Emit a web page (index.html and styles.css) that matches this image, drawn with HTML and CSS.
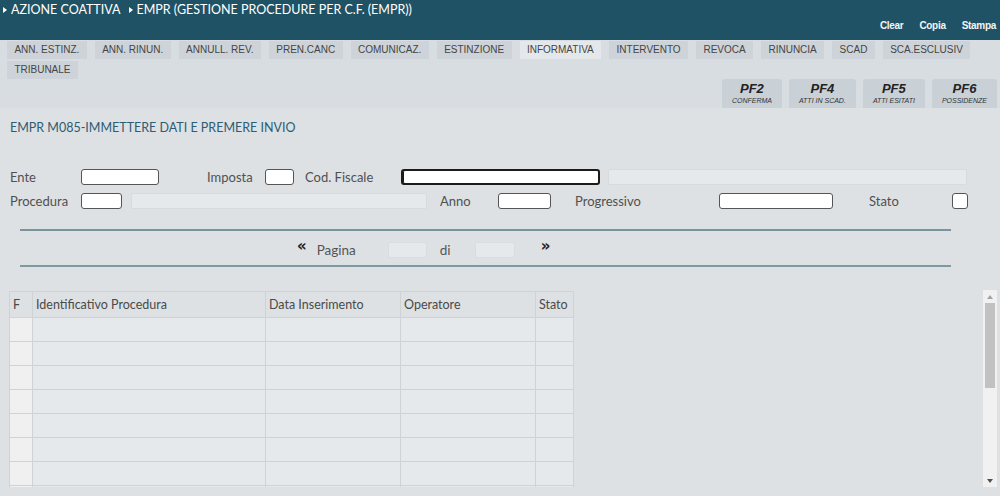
FILE: index.html
```html
<!DOCTYPE html>
<html lang="it">
<head>
<meta charset="utf-8">
<title>EMPR - Gestione procedure per C.F.</title>
<link rel="stylesheet" href="styles.css">
</head>
<body>
<header class="topbar">
  <nav class="crumbs">
    <span class="crumb"><i class="tri"></i>AZIONE COATTIVA</span>
    <span class="crumb"><i class="tri"></i>EMPR (GESTIONE PROCEDURE PER C.F. (EMPR))</span>
  </nav>
  <div class="actions"><a>Clear</a><a>Copia</a><a>Stampa</a></div>
</header>

<div class="toolbar">
  <ul class="tabs">
    <li class="tab">ANN. ESTINZ.</li>
    <li class="tab">ANN. RINUN.</li>
    <li class="tab">ANNULL. REV.</li>
    <li class="tab">PREN.CANC</li>
    <li class="tab">COMUNICAZ.</li>
    <li class="tab">ESTINZIONE</li>
    <li class="tab active">INFORMATIVA</li>
    <li class="tab">INTERVENTO</li>
    <li class="tab">REVOCA</li>
    <li class="tab">RINUNCIA</li>
    <li class="tab">SCAD</li>
    <li class="tab">SCA.ESCLUSIV</li>
    <li class="tab">TRIBUNALE</li>
  </ul>
  <div class="pfbar">
    <button class="pf"><b>PF2</b><span>CONFERMA</span></button>
    <button class="pf"><b>PF4</b><span>ATTI IN SCAD.</span></button>
    <button class="pf"><b>PF5</b><span>ATTI ESITATI</span></button>
    <button class="pf"><b>PF6</b><span>POSSIDENZE</span></button>
  </div>
</div>

<main class="main">
  <h1 class="title">EMPR M085-IMMETTERE DATI E PREMERE INVIO</h1>

  <div class="form">
    <div class="row">
      <label class="lbl w-ente">Ente</label>
      <span class="inp w-78"></span>
      <label class="lbl w-imposta">Imposta</label>
      <span class="inp w-29"></span>
      <label class="lbl w-codf">Cod. Fiscale</label>
      <span class="inp focus w-199"></span>
      <span class="inp off w-codf-desc"></span>
    </div>
    <div class="row">
      <label class="lbl w-ente">Procedura</label>
      <span class="inp w-41"></span>
      <span class="inp off w-proc-desc"></span>
      <label class="lbl w-anno">Anno</label>
      <span class="inp w-53"></span>
      <label class="lbl w-prog">Progressivo</label>
      <span class="inp w-114"></span>
      <label class="lbl w-stato">Stato</label>
      <span class="inp w-16"></span>
    </div>
  </div>

  <div class="pager">
    <span class="arrow">&laquo;</span>
    <span class="plabel">Pagina</span>
    <span class="pinp"></span>
    <span class="pdi">di</span>
    <span class="pinp pinp2"></span>
    <span class="arrow next">&raquo;</span>
  </div>

  <div class="grid-wrap">
    <div class="grid-view">
      <table class="grid">
        <thead>
          <tr>
            <th class="c-f">F</th>
            <th class="c-id">Identificativo Procedura</th>
            <th class="c-data">Data Inserimento</th>
            <th class="c-op">Operatore</th>
            <th class="c-st">Stato</th>
          </tr>
        </thead>
        <tbody>
          <tr><td class="c-f"></td><td></td><td></td><td></td><td></td></tr>
          <tr><td class="c-f"></td><td></td><td></td><td></td><td></td></tr>
          <tr><td class="c-f"></td><td></td><td></td><td></td><td></td></tr>
          <tr><td class="c-f"></td><td></td><td></td><td></td><td></td></tr>
          <tr><td class="c-f"></td><td></td><td></td><td></td><td></td></tr>
          <tr><td class="c-f"></td><td></td><td></td><td></td><td></td></tr>
          <tr><td class="c-f"></td><td></td><td></td><td></td><td></td></tr>
          <tr><td class="c-f"></td><td></td><td></td><td></td><td></td></tr>
        </tbody>
      </table>
    </div>
    <div class="vscroll" aria-hidden="true">
      <span class="sb-btn"><i class="sb-up"></i></span>
      <span class="sb-thumb"></span>
      <span class="sb-rest"></span>
      <span class="sb-btn"><i class="sb-down"></i></span>
    </div>
  </div>
</main>
</body>
</html>
```
FILE: styles.css
```css
html, body {
  margin: 0;
  height: 496px;
  overflow: hidden;
}
body {
  background: #dce0e3;
  font-family: Lato, "Noto Sans", sans-serif;
  color: #555;
}

/* ---------- top bar ---------- */
.topbar {
  background: #1f5264;
  height: 40px;
  display: flex;
  flex-direction: column;
  justify-content: space-between;
}
.crumbs {
  display: flex;
  gap: 8px;
  padding: 2px 0 0 3px;
  color: #fff;
  font-size: 12.5px;
  line-height: 15px;
}
.crumb {
  display: flex;
  align-items: center;
  gap: 4px;
}
.tri {
  width: 0;
  height: 0;
  border-left: 4px solid #fff;
  border-top: 3.5px solid transparent;
  border-bottom: 3.5px solid transparent;
}
.actions {
  display: flex;
  justify-content: flex-end;
  gap: 16px;
  padding: 0 4px 8px 0;
  font: bold 10px/12px "Liberation Sans", Arial, sans-serif;
  letter-spacing: -0.3px;
  color: #f2f5f6;
}

/* ---------- tabs + PF ---------- */
.toolbar {
  background: #d8dde1;
  height: 68px;
}
.tabs {
  display: flex;
  flex-wrap: wrap;
  gap: 2px 8px;
  margin: 0;
  padding: 1px 0 0 7px;
  list-style: none;
}
.tab {
  height: 18px;
  padding: 0 7.4px;
  background: #cdd3d8;
  font: 10px/18px "Liberation Sans", Arial, sans-serif;
  color: #454545;
}
.tab.active {
  background: #e5e8eb;
}
.pfbar {
  display: flex;
  justify-content: flex-end;
  gap: 7px;
  padding-right: 3px;
}
.pf {
  height: 29px;
  padding: 3px 10px 0;
  border: 0;
  border-radius: 3px 3px 0 0;
  background: #c9d0d6;
  display: flex;
  flex-direction: column;
  align-items: center;
  font-family: "Liberation Sans", Arial, sans-serif;
  font-style: italic;
  color: #222;
}
.pf b {
  font-size: 13px;
  line-height: 13px;
}
.pf span {
  margin-top: 2px;
  font-size: 7px;
  line-height: 8px;
  color: #333;
}

/* ---------- main ---------- */
.main {
  background: #dde1e4;
  height: 388px;
}
.title {
  margin: 0;
  padding: 12px 0 0 10px;
  font-size: 12.5px;
  line-height: 15px;
  font-weight: normal;
  color: #2c5d73;
}

.form {
  display: flex;
  flex-direction: column;
  gap: 8px;
  padding: 34px 0 0 10px;
}
.row {
  display: flex;
  align-items: center;
  height: 16px;
}
.lbl {
  flex: none;
  font-size: 13px;
  line-height: 16px;
  color: #505050;
}
.inp {
  flex: none;
  box-sizing: border-box;
  height: 16px;
  background: #fff;
  border: 1px solid #555;
  border-radius: 3px;
}
.inp.focus {
  border: 2px solid #1b1b1b;
  box-shadow: inset 1px 0 0 #1b1b1b;
}
.inp.off {
  background: #e6e9ec;
  border-color: #d6dbdf;
  border-radius: 2px;
}
.w-ente { width: 71px; }
.w-imposta { width: 58px; margin-left: 48px; }
.w-codf { width: 96px; margin-left: 11px; }
.w-codf-desc { width: 359px; margin-left: 8px; }
.w-proc-desc { width: 296px; margin-left: 9px; }
.w-anno { width: 58px; margin-left: 13px; }
.w-prog { width: 144px; margin-left: 24px; }
.w-stato { width: 83px; margin-left: 36px; }
.w-78 { width: 78px; }
.w-29 { width: 29px; }
.w-199 { width: 199px; }
.w-41 { width: 41px; }
.w-53 { width: 53px; }
.w-114 { width: 114px; }
.w-16 { width: 16px; }

/* ---------- pager ---------- */
.pager {
  margin: 20px 49px 0 20px;
  border-top: 2px solid #7a949d;
  border-bottom: 2px solid #7f99a2;
  height: 34px;
  display: flex;
  align-items: center;
  padding-left: 277px;
}
.arrow {
  font: bold 15px/16px "DejaVu Sans", sans-serif;
  color: #222;
  margin-top: -5px;
}
.plabel {
  margin-left: 10px;
  margin-top: 3px;
  font-size: 13.5px;
  color: #555;
}
.pinp {
  box-sizing: border-box;
  width: 39px;
  height: 16px;
  margin: 3px 0 0 32px;
  background: #e6e9ec;
  border: 1px solid #d9dde1;
  border-radius: 2px;
}
.pdi {
  margin: 3px 0 0 13px;
  font-size: 13.5px;
  color: #555;
}
.pinp2 {
  width: 40px;
  margin-left: 24px;
}
.arrow.next {
  margin-left: 26px;
}

/* ---------- grid ---------- */
.grid-wrap {
  display: flex;
  margin: 23px 3px 0 8px;
  height: 197px;
}
.grid-view {
  flex: 1;
  overflow: hidden;
  padding: 1px 0 0 1px;
}
.grid {
  border-collapse: collapse;
  table-layout: fixed;
  width: 564px;
}
.grid th,
.grid td {
  border: 1px solid #cfd3d6;
  padding: 0 0 0 3px;
}
.grid th {
  height: 25px;
  background: #dde1e4;
  text-align: left;
  font-weight: normal;
  font-size: 12.5px;
  color: #4a4a4a;
  white-space: nowrap;
}
.grid td {
  height: 23px;
  background: #e6e9ec;
}
.grid td.c-f {
  background: #f0f0f0;
}
.c-f { width: 19px; }
.c-id { width: 229px; }
.c-data { width: 131px; }
.c-op { width: 131px; }
.c-st { width: 34px; }

/* fake classic scrollbar */
.vscroll {
  flex: none;
  width: 14px;
  background: #f1f1f1;
  display: flex;
  flex-direction: column;
  align-items: center;
}
.sb-btn {
  height: 13px;
  width: 14px;
  display: flex;
  align-items: center;
  justify-content: center;
}
.sb-up,
.sb-down {
  width: 0;
  height: 0;
  border-left: 3.5px solid transparent;
  border-right: 3.5px solid transparent;
}
.sb-up {
  border-bottom: 4px solid #a3a3a3;
}
.sb-down {
  border-top: 4px solid #505050;
}
.sb-thumb {
  width: 10px;
  height: 85px;
  background: #c1c1c1;
}
.sb-rest {
  flex: 1;
}
```
